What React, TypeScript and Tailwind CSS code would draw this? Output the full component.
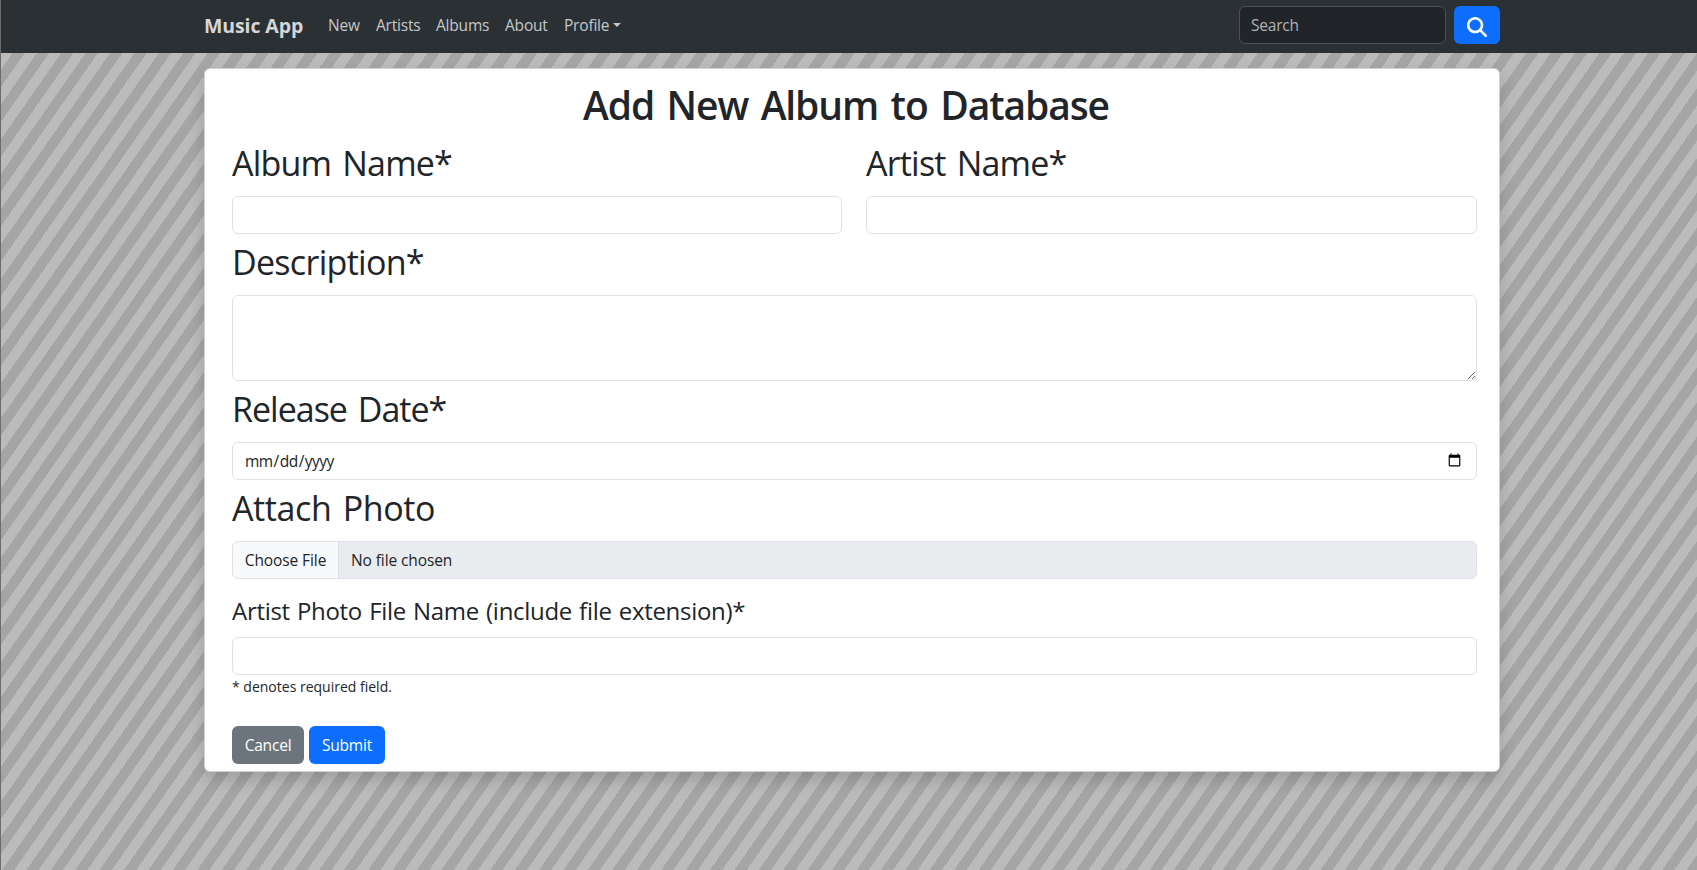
import type { ReactNode } from "react";
import { FaMagnifyingGlass } from "react-icons/fa6";

const field =
  "block w-full h-[38px] rounded-md border border-[#dee2e6] bg-white pl-[11px] pr-[12px] text-[15.5px] leading-6 tracking-[-0.55px] text-[#212529] outline-none";

function Label({ children, htmlFor, tracking }: { children: ReactNode; htmlFor: string; tracking: string }) {
  return (
    <label
      htmlFor={htmlFor}
      className={`block h-[61px] whitespace-nowrap pt-px text-[34px] font-normal leading-[55px] [word-spacing:3px] ${tracking}`}
    >
      {children}
    </label>
  );
}

function Navbar() {
  return (
    <nav className="flex h-[53px] items-start bg-[#2b3035] pl-[203px] pr-[197px] pt-[6px] text-[15.5px] text-[#c5c7c8]">
      <a href="#" className="w-[124px] whitespace-nowrap text-[19.5px] font-bold leading-[39px] tracking-[-0.1px] text-[#d5d6d7]">
        Music App
      </a>
      <div className="flex whitespace-nowrap leading-[38px] tracking-[-0.2px]">
        <a href="#" className="w-[48px]">New</a>
        <a href="#" className="w-[60px]">Artists</a>
        <a href="#" className="w-[69px]">Albums</a>
        <a href="#" className="w-[59px]">About</a>
        <a href="#" className="flex items-center">
          Profile
          <span className="ml-[4px] border-x-[4.8px] border-t-[4.8px] border-x-transparent border-t-current" />
        </a>
      </div>
      <form className="ml-auto flex gap-2">
        <input
          type="search"
          placeholder="Search"
          className="h-[38px] w-[207px] rounded-md border border-[#495057] bg-[#212529] px-[11px] text-[15.5px] tracking-[-0.2px] outline-none placeholder:text-[#b0b3b5]"
        />
        <button
          type="button"
          aria-label="Search"
          className="flex h-[38px] w-[46px] items-center justify-center rounded-md bg-[#0d6efd] pt-[4px] text-white"
        >
          <FaMagnifyingGlass className="size-5" />
        </button>
      </form>
    </nav>
  );
}

export default function App() {
  return (
    <div className="h-screen min-h-[870px] overflow-hidden border-l border-[#6c6c6c] bg-[repeating-linear-gradient(-55deg,#a5a5a5_-1.5px,#a5a5a5_8.5px,#bbbbbb_8.5px,#bbbbbb_18.5px)] font-['Open_Sans','Noto_Sans',sans-serif] text-[#212529]">
      <Navbar />
      <main className="ml-[203px] mt-[15px] w-[1296px] rounded-md border border-black/[0.175] bg-white pb-[7px] pl-[27px] pr-[22px] shadow-[0_8px_16px_rgba(0,0,0,0.15)]">
        <h1 className="h-[66px] whitespace-nowrap pr-[17px] pt-[5px] text-center text-[39px] font-semibold leading-[62px] tracking-[-1.1px] [word-spacing:3.5px]">
          Add New Album to Database
        </h1>
        <form>
          <div className="grid grid-cols-[610px_1fr] gap-6">
            <div>
              <Label htmlFor="album" tracking="tracking-[-0.8px]">Album Name*</Label>
              <input id="album" type="text" className={field} />
            </div>
            <div>
              <Label htmlFor="artist" tracking="tracking-[-0.8px]">Artist Name*</Label>
              <input id="artist" type="text" className={field} />
            </div>
          </div>
          <Label htmlFor="description" tracking="tracking-[-0.7px]">Description*</Label>
          <textarea
            id="description"
            className="block h-[86px] w-full resize-y rounded-md border border-[#dee2e6] bg-white px-3 py-1.5 outline-none"
          />
          <Label htmlFor="release" tracking="tracking-[-1px]">Release Date*</Label>
          <input id="release" type="date" className={field} />
          <Label htmlFor="photo" tracking="tracking-[-0.4px]">Attach Photo</Label>
          <input
            id="photo"
            type="file"
            className="block h-[38px] w-full overflow-hidden rounded-md border border-[#dee2e6] bg-[#e9ecef] text-[15.5px] leading-6 tracking-[-0.1px] text-[#212529] outline-none file:mr-3 file:h-[36px] file:w-[106px] file:border-0 file:border-r file:border-solid file:border-[#dee2e6] file:bg-[#f8f9fa] file:px-0 file:text-[#212529]"
          />
          <label htmlFor="filename" className="block h-[58px] whitespace-nowrap pt-[5px] text-2xl leading-[53px] tracking-[-0.3px] [word-spacing:1.2px]">
            Artist Photo File Name (include file extension)*
          </label>
          <input id="filename" type="text" className={field} />
          <p className="text-sm leading-[23px]">* denotes required field.</p>
          <div className="mt-7 flex gap-[5px] text-[15.5px] tracking-[-0.2px] text-white">
            <button type="button" className="h-[38px] w-[72px] rounded-md bg-[#6c757d] pt-px">Cancel</button>
            <button type="button" className="h-[38px] w-[76px] rounded-md bg-[#0d6efd] pt-px">Submit</button>
          </div>
        </form>
      </main>
    </div>
  );
}
